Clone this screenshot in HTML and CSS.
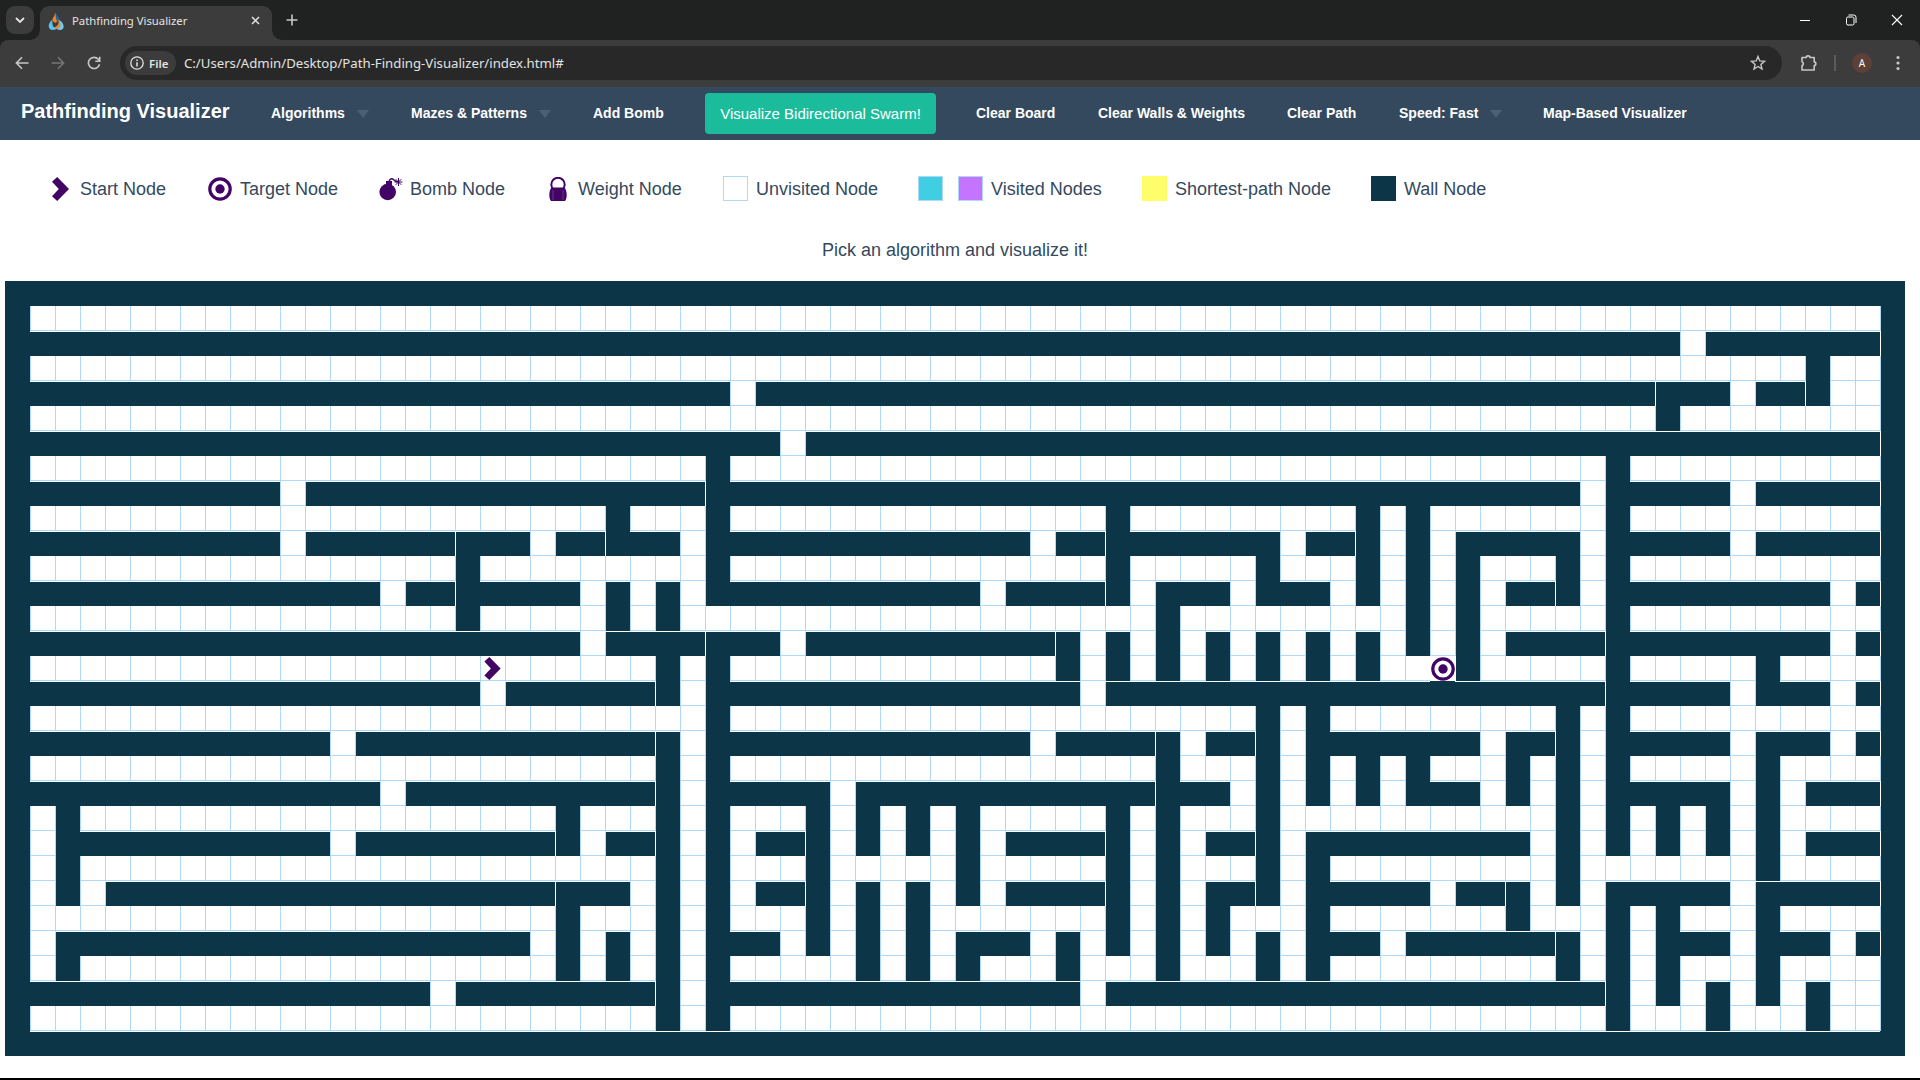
FILE: index.html
```html
<!DOCTYPE html>
<html lang="en">
<head>
<meta charset="utf-8">
<title>Pathfinding Visualizer</title>
<link rel="stylesheet" href="styles.css">
</head>
<body>
<svg class="sprite" aria-hidden="true">
  <symbol id="chevron" viewBox="0 0 17 24"><path fill="#420566" d="M5.2 0 17 12 5.2 24 0 19.3 6.8 12 0 4.7z"/></symbol>
  <symbol id="target" viewBox="0 0 24 24"><circle cx="12" cy="12" r="10.2" fill="#fff" stroke="#420566" stroke-width="3.2"/><circle cx="12" cy="12" r="4.7" fill="#420566"/></symbol>
</svg>

<header class="browser">
  <div class="tabstrip">
    <div class="tab-search"><svg width="10" height="6" viewBox="0 0 10 6"><path d="M1 1l4 4 4-4" fill="none" stroke="#e3e3e3" stroke-width="1.8"/></svg></div>
    <div class="tab">
      <svg class="favicon" width="16" height="18" viewBox="0 0 16 18"><path d="M7.500 0C8 3 4 5 4.500 9l3 2 2-2C11 6 8 4 7.500 0z" fill="#f58220"/><path d="M8 1c.5 3 4 4 3.500 8L9 11C9.500 8 6.500 5 8 1z" fill="#1467a8"/><path d="M4 8C-1 12 0 18 5 18c4 0 5-3 5-5-2 3-4 3-5 1-.7-1.500-.5-3-1-6z" fill="#5bc2f0"/><path d="M11 8c6 3 6 10 1 10-2 0-3-1-4-2 2 0 4-4 3-8z" fill="#6cccf5"/><path d="M10 7c1.500 4 0 7-3 8 1 2 4 2 5 0s0-6-2-8z" fill="#f58220"/></svg>
      <span class="tab-title">Pathfinding Visualizer</span>
      <svg class="tab-close" width="9" height="9" viewBox="0 0 9 9"><path d="M1 1l7 7M8 1L1 8" stroke="#e3e3e3" stroke-width="1.500"/></svg>
    </div>
    <svg class="new-tab" width="12" height="12" viewBox="0 0 12 12"><path d="M6 .5v11M.5 6h11" stroke="#c7c7c7" stroke-width="1.600"/></svg>
    <div class="window-buttons">
      <svg width="12" height="12" viewBox="0 0 12 12"><path d="M1 6.500h10" stroke="#fff"/></svg>
      <svg width="12" height="12" viewBox="0 0 12 12" fill="none" stroke="#fff"><rect x="1.500" y="3" width="7.500" height="8" rx="1.500"/><path d="M3.500 1h5.200a2.300 2.300 0 0 1 2.300 2.300V9"/></svg>
      <svg width="12" height="12" viewBox="0 0 12 12"><path d="M1 1l10 10M11 1L1 11" stroke="#fff" stroke-width="1.100"/></svg>
    </div>
  </div>
  <div class="toolbar">
    <svg class="back" width="14" height="14" viewBox="0 0 14 14" fill="none" stroke="#c7c7c7" stroke-width="1.600"><path d="M13.500 7H1.500M7 1.300L1.400 7 7 12.700"/></svg>
    <svg class="forward" width="14" height="14" viewBox="0 0 14 14" fill="none" stroke="#757575" stroke-width="1.600"><path d="M.5 7h12M7 1.300L12.600 7 7 12.700"/></svg>
    <svg class="reload" width="14" height="14" viewBox="0 0 14 14" fill="none" stroke="#c7c7c7" stroke-width="1.600"><path d="M12.500 8.200A5.600 5.600 0 1 1 11.300 3.300L12.500 4.800M12.700 .8v4.400H8.300"/></svg>
    <div class="address">
      <div class="file-chip">
        <svg width="14" height="14" viewBox="0 0 14 14"><circle cx="7" cy="7" r="6.200" fill="none" stroke="#e3e3e3" stroke-width="1.300"/><path d="M7 6.200v4.200M7 3.600v1.400" stroke="#e3e3e3" stroke-width="1.500"/></svg>
        <span>File</span>
      </div>
      <span class="url">C:/Users/Admin/Desktop/Path-Finding-Visualizer/index.html#</span>
      <svg class="star" width="16" height="16" viewBox="0 0 16 16"><path d="M8 1.500l1.800 4.400 4.700.4-3.600 3.100 1.100 4.600L8 11.500 4 14l1.100-4.600L1.500 6.300l4.700-.4z" fill="none" stroke="#c7c7c7" stroke-width="1.400"/></svg>
    </div>
    <svg class="puzzle" width="18" height="18" viewBox="0 0 18 18"><path d="M2 3.500h4.300a1.800 1.600 0 0 1 3.600 0h4.300v4.400a1.600 1.800 0 0 1 0 3.600V16H2v-4.300a2.200 2.200 0 0 0 0-4z" fill="none" stroke="#c7c7c7" stroke-width="1.600" stroke-linejoin="round"/></svg>
    <span class="divider"></span>
    <span class="avatar">A</span>
    <svg class="kebab" width="4" height="16" viewBox="0 0 4 16" fill="#c7c7c7"><circle cx="2" cy="2.500" r="1.600"/><circle cx="2" cy="8" r="1.600"/><circle cx="2" cy="13.500" r="1.600"/></svg>
  </div>
</header>

<nav class="navbar">
  <a class="brand">Pathfinding Visualizer</a>
  <a>Algorithms<i class="caret"></i></a>
  <a>Mazes &amp; Patterns<i class="caret"></i></a>
  <a>Add Bomb</a>
  <button class="visualize">Visualize Bidirectional Swarm!</button>
  <a>Clear Board</a>
  <a>Clear Walls &amp; Weights</a>
  <a>Clear Path</a>
  <a>Speed: Fast<i class="caret"></i></a>
  <a>Map-Based Visualizer</a>
</nav>

<main>
  <ul class="legend">
    <li><span class="icon"><svg width="17" height="24"><use href="#chevron"/></svg></span>Start Node</li>
    <li><span class="icon"><svg width="24" height="24"><use href="#target"/></svg></span>Target Node</li>
    <li><span class="icon"><svg width="24" height="24" viewBox="0 0 24 24"><circle cx="8.700" cy="15" r="8.300" fill="#420566"/><path d="M7 4h6v4H7z" fill="#420566"/><path d="M10 5.500c0-4 3-4.500 5-2.500s2.500 2 4 1.500" fill="none" stroke="#420566" stroke-width="1.400"/><path d="M19.500 1v8M15.500 5h8M16.700 2.200l5.600 5.600M22.300 2.200l-5.600 5.600" stroke="#420566"/></svg></span>Bomb Node</li>
    <li><span class="icon"><svg width="18" height="24" viewBox="0 0 18 24"><circle cx="9" cy="7.500" r="6.700" fill="none" stroke="#420566" stroke-width="2"/><path d="M2.500 10.500h13c1.500 2 2.200 4.500 2.200 7.500 0 2-.4 4.500-1.700 6H2C.7 22.500.3 20 .3 18c0-3 .7-5.500 2.200-7.500z" fill="#420566"/><path d="M4 13v10M14 13v10" stroke="#80549a" stroke-width=".6"/></svg></span>Weight Node</li>
    <li><span class="swatch unvisited"></span>Unvisited Node</li>
    <li><span class="swatch visited"></span><span class="swatch visited-bomb"></span>Visited Nodes</li>
    <li><span class="swatch path"></span>Shortest-path Node</li>
    <li><span class="swatch wall"></span>Wall Node</li>
  </ul>
  <p class="message">Pick an algorithm and visualize it!</p>
  <div class="board" id="board"></div>
</main>
<script src="board.js"></script>
</body>
</html>
```
FILE: styles.css
```css
* { box-sizing: border-box; }
body {
  margin: 0;
  height: 1080px;
  overflow: hidden;
  display: flex;
  flex-direction: column;
  background: #fff;
  border-bottom: 2px solid #000;
  color: #34495e;
  font: 18px "Liberation Sans", Arial, sans-serif;
}
svg { display: block; flex: none; }
.sprite { position: absolute; width: 0; height: 0; }

/* browser chrome */
.browser {
  flex: none;
  height: 87px;
  background: #202221;
  font-family: "Noto Sans", "Open Sans", sans-serif;
  color: #e3e3e3;
}
.tabstrip { display: flex; height: 40px; align-items: flex-start; }
.tab-search {
  display: flex; align-items: center; justify-content: center;
  width: 28px; height: 28px; margin: 6px 0 0 6px;
  border-radius: 9px; background: #3c3c3c;
}
.tab {
  position: relative;
  display: flex; align-items: center;
  width: 232px; height: 34px; margin: 6px 0 0 6px; padding: 0 12px 5px 8px;
  border-radius: 9px 9px 0 0; background: #3c3c3c;
}
.tab::before, .tab::after {
  content: ""; position: absolute; bottom: 0; width: 10px; height: 10px;
}
.tab::before { left: -10px; background: radial-gradient(circle at 0 0, transparent 9.500px, #3c3c3c 10px); }
.tab::after { right: -10px; background: radial-gradient(circle at 100% 0, transparent 9.500px, #3c3c3c 10px); }
.tab-title { margin-left: 8px; font-size: 11.300px; line-height: 16px; white-space: nowrap; }
.tab-close { margin: 0 0 1px auto; }
.new-tab { margin: 14px 0 0 14px; }
.window-buttons { display: flex; gap: 34px; margin: 14px 17px 0 auto; }
.toolbar {
  display: flex; align-items: center;
  height: 47px; padding: 0 20px 1px 15px;
  border-radius: 8px 8px 0 0;
  background: #3c3c3c;
}
.forward { margin-left: 22px; }
.reload { margin-left: 22px; }
.address {
  display: flex; align-items: center;
  width: 1662px; height: 34px; margin-left: 19px; padding: 0 16px 0 5px;
  border-radius: 17px; background: #282828;
}
.file-chip {
  display: flex; align-items: center; gap: 5px;
  width: 51px; height: 24px; padding-left: 5px;
  border-radius: 12px; background: #3c3c3c;
  font-size: 11.500px; font-weight: 600;
}
.url { margin-left: 8px; font-size: 13.200px; white-space: nowrap; }
.star { margin-left: auto; }
.puzzle { margin-left: 18px; }
.divider { width: 2px; height: 16px; margin-left: 16px; background: #5b5b5b; }
.avatar {
  width: 20px; height: 20px; margin-left: 16px;
  border-radius: 50%; background: #5d4037;
  font-size: 10px; line-height: 20px; text-align: center; color: #fff;
}
.kebab { margin-left: 24px; }

/* navigation */
.navbar {
  flex: none;
  display: grid;
  grid-template-columns: 250px 140px 182px 112px 271px 122px 189px 112px 144px 160px;
  align-items: center;
  height: 53px; padding-left: 21px;
  background: #34495e;
  color: #fff;
  font-size: 14px; font-weight: 700;
}
.navbar a { display: flex; align-items: center; padding-bottom: 2px; white-space: nowrap; }
.navbar .brand { font-size: 20px; padding-bottom: 5px; }
.caret {
  margin: 2px 0 0 12px;
  border: 6px solid transparent; border-top: 8px solid #4b6075; border-bottom: 0;
}
.visualize {
  justify-self: start;
  width: 231px; height: 41px; padding: 0;
  border: 0; border-radius: 4px;
  background: #1abc9c; color: #fff;
  font: 15px "Liberation Sans", Arial, sans-serif;
  white-space: nowrap;
}

/* legend */
main { flex: 1; display: flex; flex-direction: column; }
.legend {
  display: grid;
  grid-template-columns: 156px 171px 170px 174px 195px 224px 229px 130px;
  margin: 36px 0 0; padding: 0 0 0 52px;
  list-style: none;
}
.legend li { display: flex; align-items: flex-start; height: 25px; line-height: 27px; white-space: nowrap; }
.icon { flex: none; margin: 1px 8px 0 0; }
.legend li:first-child .icon { margin-right: 11px; }
.legend li:nth-child(3) .icon { margin-right: 7px; }
.legend li:nth-child(4) .icon { margin-right: 11px; }
.swatch { flex: none; width: 25px; height: 25px; margin-right: 8px; border: 1px solid #afd8f8; }
.visited { margin-right: 15px; background: #40cee3; }
.visited-bomb { background: #c574ff; }
.path { border-color: #fffe6a; background: #fffe6a; }
.swatch.wall { border-color: #0c3547; background: #0c3547; }
.message { margin: 37px 0 0; padding-right: 10px; line-height: 24px; text-align: center; }

/* board */
.board {
  display: grid;
  grid-template-columns: repeat(76, 25px);
  grid-auto-rows: 25px;
  margin: 19px 0 0 5px;
}
.node { border: 0 solid #afd8f8; }
.node.open { border-width: 0 0 1px 1px; }
.node.wall { background: #0c3547; }
.node.open-left { border-left: 1px solid #afd8f8; }
.node.gap-left { border-left: 1px solid #fff; }
.node.gap-top { border-top: 1px solid #fff; }
.node.start { padding: 1px 0 0 3px; }
.node.start svg { height: 23px; }
.node.finish { border: 0; padding: 1px 0 0 1px; }
```
FILE: board.js
```js
// Walls of each row as column ranges. L marks a seam on the left of the
// first column of a range, T a seam on top of it.
const rows = [
  "0-75",
  "0 75",
  "0-66 68-74 L75",
  "0 72 75",
  "0-28 30-65 L66-68 70-71 L72 75",
  "0 66 75",
  "0-30 32-65 T66 67-74 L75",
  "0 28 64 75",
  "0-10 12-27 L28-62 64-68 70-74 L75",
  "0 24 28 44 54 56 64 75",
  "0-10 12-17 L18-20 22-23 L24-26 28-40 42-43 L44-50 52-53 L54 56 58-62 64-68 70-74 L75",
  "0 18 28 44 50 54 56 58 62 64 75",
  "0-14 16-17 L18-22 24 26 28-38 40-43 L44 46-48 50-52 54 56 58 60-61 L62 64-72 74 L75",
  "0 18 24 26 46 56 58 64 75",
  "0-17 T18 19-22 T24 25 T26 27 L28-30 32-41 L42 44 46 48 50 52 54 56 58 60-63 L64-72 74 L75",
  "0 26 28 42 44 46 48 50 52 54 L58 64 70 75",
  "0-18 20-25 L26 28-41 T42 T44 45 T46 47 T48 49 T50 51 T52 53 T54 55-57 T58 59-63 L64-68 70-72 74 L75",
  "0 28 50 52 62 64 75",
  "0-12 14-25 L26 28-40 42-45 L46 48-49 L50 52-58 60-61 L62 64-68 70-72 74 L75",
  "0 26 28 46 50 52 54 56 60 62 64 70 75",
  "0-14 16-25 L26 28-32 34-45 L46-48 50 52 54 56-58 60 62 64-68 70 72-74 L75",
  "0 2 22 26 28 32 34 36 38 44 46 50 62 64 66 68 70 75",
  "0 2-12 14-21 L22 24-25 L26 28 30-31 L32 34 36 38 40-43 L44 46 48-49 L50 52-60 62 64 66 68 70 72-74 L75",
  "0 2 26 28 32 38 44 46 50 52 62 70 75",
  "0 2 4-21 L22-24 26 28 30-31 L32 34 36 38 40-43 L44 46 48-49 L50 52-56 58-59 L60 62 64-68 T70 71-74 L75",
  "0 22 26 28 32 34 36 44 46 48 52 60 64 66 70 75",
  "0 2-20 22 24 26 28-30 32 34 36 38-40 42 44 46 48 50 52-54 56-59 T60 61 L62 64 66-68 70-72 74 L75",
  "0 2 22 24 26 28 34 36 38 42 46 50 52 62 64 66 70 75",
  "0-1 T2 3-16 18-21 T22 23 T24 25 L26 28-33 T34 35 T36 37 T38 39-41 T42 44-45 T46 47-49 T50 51 T52 53-61 T62 63 L64 66 68 70 72 75",
  "0 26 28 64 68 72 75",
  "0-25 T26 27 T28 29-63 T64 65-67 T68 69-71 T72 73-75"
];
const columns = 76;
const start = { row: 15, col: 19 };
const finish = { row: 15, col: 57 };

const grid = rows.map(text => {
  const line = new Array(columns).fill(null);
  for (const token of text.split(" ")) {
    const [, seam, from, to] = token.match(/^([LT]?)(\d+)-?(\d*)$/);
    for (let c = +from; c <= +(to || from); c++) line[c] = c === +from ? seam : "";
  }
  return line;
});

const board = document.getElementById("board");
const icon = (id, width) => `<svg width="${width}" height="24"><use href="#${id}"/></svg>`;

grid.forEach((line, r) => line.forEach((seam, c) => {
  const node = document.createElement("div");
  const isWall = seam !== null;
  const belowFinish = r === finish.row + 1 && c === finish.col;
  node.className = "node " + (isWall ? "wall" : "open");
  if (isWall) {
    const openAbove = r > 0 && grid[r - 1][c] === null;
    if (c > 0 && line[c - 1] === null) node.classList.add("open-left");
    if (seam === "L") node.classList.add("gap-left");
    if (seam === "T" || (openAbove && !belowFinish)) node.classList.add("gap-top");
  }
  if (r === start.row && c === start.col) {
    node.classList.add("start");
    node.innerHTML = icon("chevron", 17);
  }
  if (r === finish.row && c === finish.col) {
    node.classList.add("finish");
    node.innerHTML = icon("target", 24);
  }
  board.append(node);
}));
```
